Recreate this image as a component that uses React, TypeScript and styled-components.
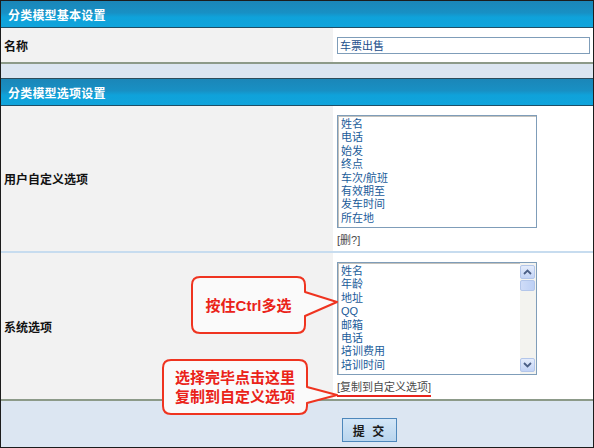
import React from "react";
import styled, { createGlobalStyle } from "styled-components";

const GlobalStyle = createGlobalStyle`
  html, body {
    margin: 0;
    padding: 0;
    background: #ffffff;
  }
  body {
    font-family: "Liberation Sans", "Noto Sans CJK SC", sans-serif;
  }
  * { box-sizing: border-box; }
`;

const Page = styled.div`
  position: relative;
  width: 594px;
  height: 448px;
  border: 1px solid #1c1c1c;
  background: #dce6f2;
  display: flex;
  flex-direction: column;
  overflow: hidden;
`;

const SectionHeader = styled.div`
  height: 27px;
  flex: none;
  display: flex;
  align-items: center;
  padding-left: 7px;
  color: #ffffff;
  font-size: 12px;
  font-weight: bold;
  letter-spacing: 0.2px;
  background: linear-gradient(#1b86b8 0%, #1890c4 45%, #0fa2da 62%, #10a4dc 100%);
  border-bottom: 1px solid #1f4e66;
`;

const FieldRow = styled.div<{ $height: number; $divider: "olive" | "blue" }>`
  flex: none;
  height: ${(p) => p.$height}px;
  display: grid;
  grid-template-columns: 332px 1fr;
  border-bottom: 2px solid
    ${(p) => (p.$divider === "olive" ? "#8c9a89" : "#c7dcef")};
`;

const Label = styled.div`
  background: #f2f2f2;
  display: flex;
  align-items: center;
  padding-left: 3px;
  font-size: 12px;
  font-weight: bold;
  color: #111111;
`;

const Value = styled.div<{ $top?: boolean }>`
  background: #ffffff;
  display: flex;
  flex-direction: column;
  justify-content: ${(p) => (p.$top ? "flex-start" : "center")};
  align-items: flex-start;
  padding: ${(p) => (p.$top ? "9px 0 0 4px" : "0 4px 0 4px")};
`;

const TextInput = styled.input`
  width: 253px;
  height: 17px;
  border: 1px solid #7f9db9;
  padding: 0 2px;
  font-family: "Liberation Sans", "Noto Sans CJK SC", sans-serif;
  font-size: 11px;
  color: #1d4f8c;
  background: #ffffff;
  outline: none;
`;

const Spacer = styled.div`
  flex: none;
  height: 15px;
  background: #dbe5f1;
  border-bottom: 1px solid #2d4c5c;
`;

const ListBox = styled.div`
  width: 200px;
  height: 113px;
  border: 1px solid #7f9db9;
  box-shadow: inset 1px 1px 0 #c4c2bc;
  background: #ffffff;
  display: flex;
  overflow: hidden;
`;

const ListItems = styled.ul`
  flex: 1;
  margin: 0;
  padding: 2px 0 0 3px;
  list-style: none;
  overflow: hidden;
`;

const ListItem = styled.li`
  font-size: 11px;
  line-height: 13.4px;
  height: 13.4px;
  color: #1b5c9a;
  white-space: nowrap;
`;

const ScrollBar = styled.div`
  width: 16px;
  flex: none;
  display: flex;
  flex-direction: column;
  padding: 2px 1px 2px 0;
  background: #f3f3ef;
`;

const ScrollButton = styled.div`
  height: 14px;
  flex: none;
  border: 1px solid #b3c6ea;
  border-radius: 2px;
  background: linear-gradient(#e4ecfb, #c2d3f6);
  display: flex;
  align-items: center;
  justify-content: center;
`;

const ScrollThumb = styled.div`
  height: 11px;
  flex: none;
  margin-top: 1px;
  border: 1px solid #b3c6ea;
  border-radius: 2px;
  background: linear-gradient(90deg, #cfdcf8, #bdd0f5);
`;

const ScrollTrack = styled.div`
  flex: 1;
`;

const Action = styled.span<{ $marked?: boolean }>`
  display: inline-block;
  margin-top: 6px;
  font-size: 11px;
  line-height: 13px;
  color: #4a4a4a;
  padding-bottom: 1px;
  border-bottom: 2px solid ${(p) => (p.$marked ? "#e8241c" : "transparent")};
`;

const FooterRow = styled.div`
  flex: 1;
  display: grid;
  grid-template-columns: 332px 1fr;
  background: #dce6f2;
`;

const FooterCell = styled.div`
  padding: 17px 0 0 9px;
`;

const SubmitButton = styled.button`
  width: 55px;
  height: 24px;
  border: 1px solid #4d87bb;
  background: linear-gradient(#d3e6f7, #b9d5ee);
  font-family: "Liberation Sans", "Noto Sans CJK SC", sans-serif;
  font-size: 12px;
  font-weight: bold;
  color: #1a1a1a;
  letter-spacing: 2px;
  padding: 0;
`;

const Callout = styled.div<{ $left: number; $top: number; $w: number; $h: number }>`
  position: absolute;
  left: ${(p) => p.$left}px;
  top: ${(p) => p.$top}px;
  width: ${(p) => p.$w}px;
  height: ${(p) => p.$h}px;
`;

const CalloutShape = styled.svg`
  position: absolute;
  left: 0;
  top: 0;
  overflow: visible;
`;

const CalloutText = styled.div<{ $w: number; $h: number }>`
  position: relative;
  width: ${(p) => p.$w}px;
  height: ${(p) => p.$h}px;
  display: flex;
  flex-direction: column;
  align-items: center;
  justify-content: center;
  font-family: "Liberation Sans", "Noto Sans CJK SC", sans-serif;
  color: #ea2218;
  font-size: 15px;
  font-weight: bold;
  line-height: 19px;
  white-space: nowrap;
`;

const Arrow = ({ up }: { up?: boolean }) => (
  <svg width="9" height="6" viewBox="0 0 9 6">
    <path
      d={up ? "M1 5 L4.5 1.5 L8 5" : "M1 1 L4.5 4.5 L8 1"}
      fill="none"
      stroke="#4b5f86"
      strokeWidth="1.8"
    />
  </svg>
);

// outline of a rounded box with a pointer on its right side
const bubblePath = (w: number, h: number, a1: number, tx: number, ty: number, a2: number) => {
  const r = 8;
  return [
    `M ${1 + r} 1`,
    `H ${w - 1 - r}`,
    `Q ${w - 1} 1 ${w - 1} ${1 + r}`,
    `V ${a1}`,
    `L ${tx} ${ty}`,
    `L ${w - 1} ${a2}`,
    `V ${h - 1 - r}`,
    `Q ${w - 1} ${h - 1} ${w - 1 - r} ${h - 1}`,
    `H ${1 + r}`,
    `Q 1 ${h - 1} 1 ${h - 1 - r}`,
    `V ${1 + r}`,
    `Q 1 1 ${1 + r} 1`,
    "Z",
  ].join(" ");
};

const customFields = ["姓名", "电话", "始发", "终点", "车次/航班", "有效期至", "发车时间", "所在地"];
const systemFields = ["姓名", "年龄", "地址", "QQ", "邮箱", "电话", "培训费用", "培训时间"];

export default function App() {
  return (
    <>
      <GlobalStyle />
      <Page>
        <SectionHeader>分类模型基本设置</SectionHeader>
        <FieldRow $height={36} $divider="olive">
          <Label>名称</Label>
          <Value>
            <TextInput defaultValue="车票出售" readOnly />
          </Value>
        </FieldRow>
        <Spacer />
        <SectionHeader>分类模型选项设置</SectionHeader>
        <FieldRow $height={147} $divider="blue">
          <Label>用户自定义选项</Label>
          <Value $top>
            <ListBox>
              <ListItems>
                {customFields.map((f) => (
                  <ListItem key={f}>{f}</ListItem>
                ))}
              </ListItems>
            </ListBox>
            <Action>[删?]</Action>
          </Value>
        </FieldRow>
        <FieldRow $height={148} $divider="olive">
          <Label>系统选项</Label>
          <Value $top>
            <ListBox>
              <ListItems>
                {systemFields.map((f) => (
                  <ListItem key={f}>{f}</ListItem>
                ))}
              </ListItems>
              <ScrollBar>
                <ScrollButton>
                  <Arrow up />
                </ScrollButton>
                <ScrollThumb />
                <ScrollTrack />
                <ScrollButton>
                  <Arrow />
                </ScrollButton>
              </ScrollBar>
            </ListBox>
            <Action $marked>[复制到自定义选项]</Action>
          </Value>
        </FieldRow>
        <FooterRow>
          <div />
          <FooterCell>
            <SubmitButton>提 交</SubmitButton>
          </FooterCell>
        </FooterRow>

        <Callout $left={190} $top={275} $w={148} $h={58}>
          <CalloutShape width="148" height="58">
            <path
              d={bubblePath(115, 58, 16, 146, 26, 40)}
              fill="#fafafa"
              stroke="#ef3420"
              strokeWidth="2"
              strokeLinejoin="round"
            />
          </CalloutShape>
          <CalloutText $w={115} $h={58}>按住Ctrl多选</CalloutText>
        </Callout>

        <Callout $left={161} $top={358} $w={177} $h={56}>
          <CalloutShape width="177" height="56">
            <path
              d={bubblePath(146, 56, 28, 175, 36, 44)}
              fill="#fafafa"
              stroke="#ef3420"
              strokeWidth="2"
              strokeLinejoin="round"
            />
          </CalloutShape>
          <CalloutText $w={146} $h={56}>
            <span>选择完毕点击这里</span>
            <span>复制到自定义选项</span>
          </CalloutText>
        </Callout>
      </Page>
    </>
  );
}
